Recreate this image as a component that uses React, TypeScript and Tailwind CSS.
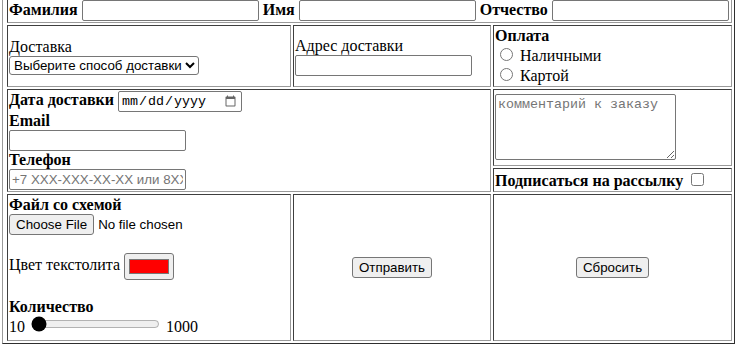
import React from "react";

// cell borders imitate the old border="1" table look (inset cells, outset table)
const cell =
  "border border-t-[#3f3f3f] border-l-[#3f3f3f] border-r-[#9a9a9a] border-b-[#9a9a9a] p-px align-middle";

const textInput =
  "h-[21px] w-[177px] rounded-[2px] border border-[#767676] bg-white px-[2px] align-baseline font-['Liberation_Sans',Arial,sans-serif] text-[13.333px] placeholder:text-[#757575]";

const button =
  "h-[21px] rounded-[3px] border border-[#767676] bg-[#efefef] px-[6px] font-['Liberation_Sans',Arial,sans-serif] text-[13.333px]";

export default function App() {
  return (
    <div className="h-[346px] overflow-hidden bg-white font-['Liberation_Serif','Times_New_Roman',serif] text-[16px] leading-[normal] text-black">
      <form>
        <table className="-mt-[5px] ml-[2px] w-[733px] border-separate border-spacing-[2px] border border-t-[#9a9a9a] border-l-[#9a9a9a] border-r-[#2f2f2f] border-b-[#2f2f2f] pl-[2px]">
          <tbody>
            <tr>
              <td colSpan={3} className={cell + " h-[25px] whitespace-nowrap"}>
                <b>Фамилия</b> <input type="text" className={textInput} />{" "}
                <b>Имя</b> <input type="text" className={textInput} />{" "}
                <b>Отчество</b> <input type="text" className={textInput} />
              </td>
            </tr>
            <tr>
              <td className={cell + " h-[62px] w-[284px]"}>
                Доставка
                <br />
                <select className="h-[19px] rounded-[3px] border border-[#767676] bg-white font-['Liberation_Sans',Arial,sans-serif] text-[13.333px]">
                  <option>Выберите способ доставки</option>
                  <option>Курьер</option>
                  <option>Самовывоз</option>
                </select>
              </td>
              <td className={cell + " w-[198px]"}>
                Адрес доставки
                <br />
                <input type="text" className={textInput} />
              </td>
              <td className={cell + " w-[239px]"}>
                <b>Оплата</b>
                <br />
                <label>
                  <input type="radio" name="pay" className="mt-[3px] mr-[3px] ml-[5px]" /> Наличными
                </label>
                <br />
                <label>
                  <input type="radio" name="pay" className="mt-[3px] mr-[3px] ml-[5px]" /> Картой
                </label>
              </td>
            </tr>
            <tr>
              <td colSpan={2} rowSpan={2} className={cell}>
                <b>Дата доставки</b>{" "}
                <input
                  type="date"
                  className="h-[21px] w-[124px] rounded-[2px] border border-[#767676] bg-white px-[2px] font-['Liberation_Mono','Courier_New',monospace] text-[13.333px] [&::-webkit-calendar-picker-indicator]:opacity-60"
                />
                <br />
                <b>Email</b>
                <br />
                <input type="email" className={textInput} />
                <br />
                <b>Телефон</b>
                <br />
                <input type="tel" placeholder="+7 XXX-XXX-XX-XX или 8XXX-XXX-XX-XX" className={textInput} />
              </td>
              <td className={cell + " h-[76px]"}>
                <textarea
                  placeholder="комментарий к заказу"
                  className="h-[66px] w-[181px] rounded-[2px] border border-[#767676] bg-white px-[2px] py-[2px] align-middle font-['Liberation_Mono','Courier_New',monospace] text-[13.333px] placeholder:text-[#757575]"
                />
              </td>
            </tr>
            <tr>
              <td className={cell + " h-[24px] whitespace-nowrap"}>
                <b>Подписаться на рассылку</b>{" "}
                <input type="checkbox" className="my-[3px] mr-[3px] ml-[4px]" />
              </td>
            </tr>
            <tr>
              <td className={cell + " h-[147px] !align-top"}>
                <b>Файл со схемой</b>
                <br />
                <input
                  type="file"
                  className="font-['Liberation_Sans',Arial,sans-serif] text-[13.333px] file:mr-[4px] file:h-[21px] file:rounded-[3px] file:border file:border-[#767676] file:bg-[#efefef] file:px-[6px]"
                />
                <br />
                <br />
                Цвет текстолита{" "}
                <input
                  type="color"
                  defaultValue="#ff0000"
                  className="h-[27px] w-[50px] rounded-[3px] border border-[#767676] bg-[#efefef] px-[2px] py-[1px] align-middle"
                />
                <br />
                <br />
                <b>Количество</b>
                <br />
                10 <input type="range" min={10} max={1000} defaultValue={10} className="mx-[2px] w-[129px] accent-black" /> 1000
              </td>
              <td className={cell + " text-center"}>
                <button type="submit" className={button}>
                  Отправить
                </button>
              </td>
              <td className={cell + " text-center"}>
                <button type="reset" className={button}>
                  Сбросить
                </button>
              </td>
            </tr>
          </tbody>
        </table>
      </form>
    </div>
  );
}
